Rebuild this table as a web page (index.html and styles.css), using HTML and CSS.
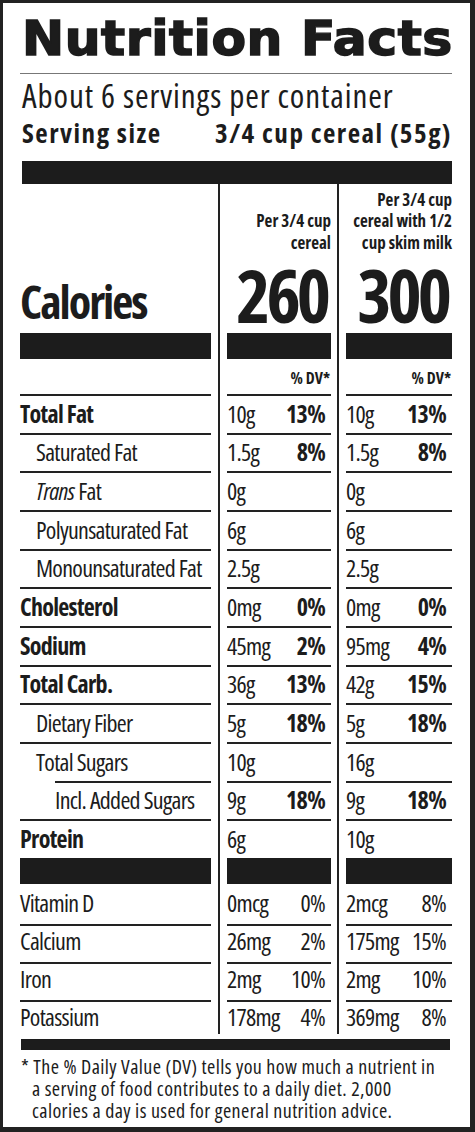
FILE: index.html
```html
<!DOCTYPE html>
<html>
<head>
    <title>Nutrition Facts</title>
    <link rel="stylesheet" href="styles.css">
</head>
<body>
    <div class="label">
        <h1 class="title"><span class="title-text">Nutrition Facts</span></h1>
        <div class="servings">About 6 servings per container</div>
        <div class="serving-size">
            <span>Serving size</span>
            <span>3/4 cup cereal (55g)</span>
        </div>
        <div class="bar-top"></div>

        <div class="facts">
            <div class="col col-names">
                <div class="head">
                    <div class="cal-label">Calories</div>
                </div>
                <div class="cal-bar"></div>
                <div class="dv"></div>
                <div class="row bold">Total Fat</div>
                <div class="row indent">Saturated Fat</div>
                <div class="row indent"><i>Trans</i>&nbsp;Fat</div>
                <div class="row indent">Polyunsaturated Fat</div>
                <div class="row indent">Monounsaturated Fat</div>
                <div class="row bold">Cholesterol</div>
                <div class="row bold">Sodium</div>
                <div class="row bold">Total Carb.</div>
                <div class="row indent">Dietary Fiber</div>
                <div class="row indent">Total Sugars</div>
                <div class="row indent-2">Incl. Added Sugars</div>
                <div class="row bold">Protein</div>
                <div class="cal-bar"></div>
                <div class="vitamins">
                    <div class="vrow">Vitamin D</div>
                    <div class="vrow">Calcium</div>
                    <div class="vrow">Iron</div>
                    <div class="vrow">Potassium</div>
                </div>
            </div>

            <div class="col col-val">
                <div class="head">
                    <div class="per">Per 3/4 cup<br>cereal</div>
                    <div class="cal-num">260</div>
                </div>
                <div class="cal-bar"></div>
                <div class="dv">% DV*</div>
                <div class="row"><span>10g</span><b>13%</b></div>
                <div class="row"><span>1.5g</span><b>8%</b></div>
                <div class="row"><span>0g</span></div>
                <div class="row"><span>6g</span></div>
                <div class="row"><span>2.5g</span></div>
                <div class="row"><span>0mg</span><b>0%</b></div>
                <div class="row"><span>45mg</span><b>2%</b></div>
                <div class="row"><span>36g</span><b>13%</b></div>
                <div class="row"><span>5g</span><b>18%</b></div>
                <div class="row"><span>10g</span></div>
                <div class="row"><span>9g</span><b>18%</b></div>
                <div class="row"><span>6g</span></div>
                <div class="cal-bar"></div>
                <div class="vitamins">
                    <div class="vrow"><span>0mcg</span><span>0%</span></div>
                    <div class="vrow"><span>26mg</span><span>2%</span></div>
                    <div class="vrow"><span>2mg</span><span>10%</span></div>
                    <div class="vrow"><span>178mg</span><span>4%</span></div>
                </div>
            </div>

            <div class="col col-val col-last">
                <div class="head">
                    <div class="per">Per 3/4 cup<br>cereal with 1/2<br>cup skim milk</div>
                    <div class="cal-num">300</div>
                </div>
                <div class="cal-bar"></div>
                <div class="dv">% DV*</div>
                <div class="row"><span>10g</span><b>13%</b></div>
                <div class="row"><span>1.5g</span><b>8%</b></div>
                <div class="row"><span>0g</span></div>
                <div class="row"><span>6g</span></div>
                <div class="row"><span>2.5g</span></div>
                <div class="row"><span>0mg</span><b>0%</b></div>
                <div class="row"><span>95mg</span><b>4%</b></div>
                <div class="row"><span>42g</span><b>15%</b></div>
                <div class="row"><span>5g</span><b>18%</b></div>
                <div class="row"><span>16g</span></div>
                <div class="row"><span>9g</span><b>18%</b></div>
                <div class="row"><span>10g</span></div>
                <div class="cal-bar"></div>
                <div class="vitamins">
                    <div class="vrow"><span>2mcg</span><span>8%</span></div>
                    <div class="vrow"><span>175mg</span><span>15%</span></div>
                    <div class="vrow"><span>2mg</span><span>10%</span></div>
                    <div class="vrow"><span>369mg</span><span>8%</span></div>
                </div>
            </div>
        </div>

        <div class="bar-bottom"></div>
        <p class="footnote">* The % Daily Value (DV) tells you how much a nutrient in<br>a serving of food contributes to a daily diet. 2,000<br>calories a day is used for general nutrition advice.</p>
    </div>
</body>
</html>
```
FILE: styles.css
```css
body {
    margin: 0;
    background-color: #fff;
    color: #1c1c1c;
    font-family: "Open Sans", sans-serif;
    font-stretch: 75%;
}

.label {
    width: 475px;
    height: 1132px;
    box-sizing: border-box;
    border: 3px solid #222;
    border-right-width: 5px;
    border-bottom-width: 5px;
    padding: 0 18px 0 17px;
}

.title {
    margin: 11px 0 0 0;
    padding: 0 0 11px 2px;
    border-bottom: 1px solid #777;
    font-family: "DejaVu Sans", sans-serif;
    font-size: 48px;
    line-height: 48px;
    font-weight: 700;
    letter-spacing: 0.5px;
    -webkit-text-stroke: 1.4px #1c1c1c;
    white-space: nowrap;
}

/* the printed heading face is wider than anything installed, so stretch it */
.title-text {
    display: inline-block;
    transform: scaleX(1.165);
    transform-origin: left top;
}

.servings {
    margin-top: 6px;
    padding-left: 2px;
    font-size: 33px;
    line-height: 32px;
    font-stretch: 87.5%;
    letter-spacing: 0.9px;
    white-space: nowrap;
}

.serving-size {
    display: flex;
    justify-content: space-between;
    margin-top: 8px;
    padding-left: 2px;
    font-size: 27px;
    line-height: 26px;
    font-weight: 700;
    font-stretch: 87.5%;
    letter-spacing: 1.5px;
    white-space: nowrap;
}

.bar-top {
    margin-top: 15px;
    margin-left: 2px;
    height: 23px;
    background-color: #1c1c1c;
}

.facts {
    display: flex;
}

.col-names {
    width: 191px;
}

.col-val {
    width: 104px;
    margin-left: 7px;
    padding-left: 7px;
    border-left: 2px solid #222;
}

.col-last {
    width: 106px;
    margin-left: 6px;
}

.head {
    height: 149px;
    box-sizing: border-box;
    display: flex;
    flex-direction: column;
    justify-content: flex-end;
    align-items: flex-end;
    padding-bottom: 1px;
    font-weight: 700;
}

.col-names .head {
    align-items: flex-start;
    padding-bottom: 13px;
}

.cal-label {
    font-size: 46px;
    line-height: 37px;
    letter-spacing: -2px;
}

.per {
    margin-bottom: 5px;
    font-size: 17px;
    line-height: 21.5px;
    text-align: right;
}

.cal-num {
    font-size: 73px;
    line-height: 74px;
    letter-spacing: -4px;
    margin-right: 4px;
}

.cal-bar {
    height: 26px;
    background-color: #1c1c1c;
}

.dv {
    height: 35px;
    box-sizing: border-box;
    display: flex;
    align-items: flex-end;
    justify-content: flex-end;
    padding: 0 1px 8px 0;
    font-size: 16px;
    line-height: 16px;
    font-weight: 700;
}

.row {
    height: 38.67px;
    box-sizing: border-box;
    border-top: 2px solid #222;
    display: flex;
    align-items: flex-end;
    padding-bottom: 7px;
    font-size: 24px;
    line-height: 24px;
    letter-spacing: -0.7px;
    white-space: nowrap;
}

.col-val .row,
.col-val .vrow {
    justify-content: space-between;
    padding-right: 6px;
}

.bold {
    font-weight: 700;
}

.indent {
    padding-left: 16px;
}

.indent-2 {
    margin-left: 35px;
}

.vitamins {
    padding-top: 4px;
}

.vrow {
    height: 38px;
    box-sizing: border-box;
    border-bottom: 2px solid #222;
    display: flex;
    align-items: flex-end;
    padding-bottom: 9px;
    font-size: 24px;
    line-height: 24px;
    letter-spacing: -0.7px;
    white-space: nowrap;
}

.vrow:last-child {
    height: 32px;
    border-bottom: none;
    padding-bottom: 5px;
}

.bar-bottom {
    margin: 5px 2px 0 1px;
    height: 11px;
    background-color: #1c1c1c;
}

.footnote {
    margin: 6px 0 0 1px;
    padding-left: 11px;
    text-indent: -11px;
    font-size: 20px;
    line-height: 22px;
    letter-spacing: 0.4px;
    white-space: nowrap;
}
```
